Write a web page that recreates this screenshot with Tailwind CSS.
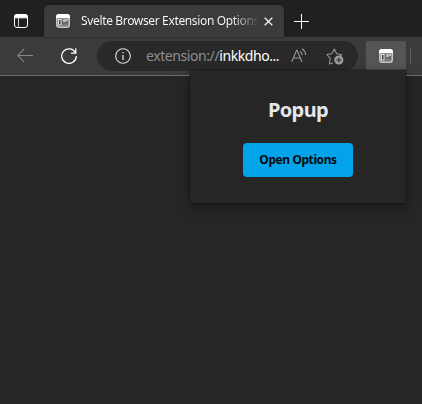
<!DOCTYPE html>
<html lang="en">
<head>
<meta charset="utf-8">
<title>Svelte Browser Extension Options</title>
<script src="https://cdn.jsdelivr.net/npm/@tailwindcss/browser@4"></script>
</head>
<body class="relative flex h-[404px] w-[422px] flex-col overflow-hidden bg-[#262626] font-['Noto_Sans','Open_Sans',sans-serif]">
<svg class="hidden">
  <symbol id="ext" viewBox="0 0 14 14">
    <rect x=".75" y=".75" width="12.5" height="12.5" rx="2.5" fill="#6a6a6a" stroke="#c8c8c8" stroke-width="1.5"/>
    <path d="M0 4.2V3Q0 0 3 0H11Q14 0 14 3V4.2Z" fill="#fff"/>
    <rect x="2.5" y="5.5" width="2.5" height="5.5" fill="#3c3c3c" stroke="#e6e6e6"/>
    <path d="M7 5.5h5M7 6.5h5M7 7.5h3" stroke="#b8b8b8"/><path d="M6 11h6" stroke="#959595"/>
  </symbol>
</svg>
<!-- Tab strip -->
<header class="flex h-[37px] shrink-0 items-end bg-[#202020]">
  <div class="flex h-8 w-11 items-center pl-3.5">
    <svg class="size-[14px]" viewBox="0 0 14 14" fill="none" stroke="#fff"><rect x=".5" y=".5" width="13" height="13" rx="2.5"/><path d="M.5 3.8V3Q.5.5 3 .5H11Q13.5.5 13.5 3V3.8Z" fill="#fff"/><path d="M4.5 4v9.5" stroke="#c8c8c8"/></svg>
  </div>
  <div class="relative flex h-8 w-60 items-center rounded-t-[5px] bg-[#3b3b3b] pl-3 shadow-[0_0_3px_rgba(0,0,0,0.45)]">
    <svg class="size-[14px] shrink-0"><use href="#ext"/></svg>
    <div class="ml-[11px] w-[176px] overflow-hidden bg-linear-to-r from-white from-85% to-white/10 bg-clip-text text-[12px] leading-5 tracking-[-0.35px] whitespace-nowrap text-transparent">Svelte Browser Extension Options</div>
    <svg class="ml-[7px] size-[9px] shrink-0" viewBox="0 0 9 9" stroke="#f2f2f2" stroke-width="1.3"><path d="M.7.7l7.6 7.6M8.3.7L.7 8.3"/></svg>
  </div>
  <div class="flex h-8 items-center pl-[10px]">
    <svg class="size-[15px]" viewBox="0 0 15 15" stroke="#fff"><path d="M0 7.5h15M7.5 0v15"/></svg>
  </div>
</header>
<!-- Toolbar -->
<div class="flex h-[39px] shrink-0 items-center border-b border-[#6c6c6c] bg-[#3b3b3b]">
  <svg class="ml-[17px] size-4" viewBox="0 0 16 16" fill="none" stroke="#858585" stroke-width="1.1"><path d="M16 7.5H.7M7.3.8L.7 7.5l6.6 6.7"/></svg>
  <svg class="ml-7 size-4" viewBox="0 0 16 16" fill="none" stroke="#fff" stroke-width="1.2"><path d="M14.7 5.2A7.3 7.3 0 1 0 15.3 8M14.8.2v5H10"/></svg>
  <div class="ml-5 flex h-[30px] w-[261px] items-center rounded-full bg-[#292929] pl-[18px]">
    <svg class="size-4 shrink-0" viewBox="0 0 16 16" fill="none" stroke="#dedede" stroke-width="1.1"><circle cx="8" cy="8" r="7.3"/><path d="M8 7v5M8 4v1.3" stroke-width="1.3"/></svg>
    <div class="ml-[15px] w-[134px] text-[14px] leading-5 tracking-[-0.42px] whitespace-nowrap text-[#8e8e8e]">extension://<span class="text-white">inkkdho...</span></div>
    <svg class="ml-[11px] size-4 shrink-0" viewBox="0 0 16 16" fill="none" stroke="#969696" stroke-width="1.1"><path d="M.7 14L5.6 2.3h.5L11 14M2.3 10h7.1M9 3.2q2 1.2 2.2 3.8M11.2.8q3.2 2.3 3.5 6.2"/></svg>
    <svg class="ml-[19px] h-[17px] w-[18px] shrink-0" viewBox="0 0 18 17" fill="none"><path d="M7 15L3.5 16 4.2 10.3.8 6.5l5-.7L8.3 1l2.4 4.8 5 .7-1.5 1.5" stroke="#969696" stroke-width="1.1" stroke-linejoin="round"/><circle cx="12.8" cy="12" r="4.6" fill="#9c9c9c"/><path d="M10.3 12h5M12.8 9.5v5" stroke="#2b2b2b" stroke-width="1.1"/></svg>
  </div>
  <div class="ml-2 flex h-[30px] w-10 items-center justify-center rounded-[2px] bg-[#555]"><svg class="size-[14px]"><use href="#ext"/></svg></div>
  <div class="ml-1 h-4 w-px bg-[#606060]"></div>
</div>
<main class="flex-1 bg-[#262626]"></main>
<!-- Extension popup -->
<section class="absolute top-[70px] left-[190px] flex h-[133px] w-[216px] flex-col items-center bg-[#262626] pt-[26px] shadow-[0_0_0_1px_rgba(0,0,0,0.25),0_5px_12px_rgba(0,0,0,0.35)]">
  <h1 class="text-[20px] leading-7 font-bold tracking-[-0.6px] whitespace-nowrap text-[#e5e7eb]">Popup</h1>
  <button class="mt-[19px] h-[34px] w-[110px] rounded-[4px] bg-[#02a3e9] text-[12px] font-bold tracking-[-0.42px] whitespace-nowrap text-[#080b0f]">Open Options</button>
</section>
</body>
</html>
